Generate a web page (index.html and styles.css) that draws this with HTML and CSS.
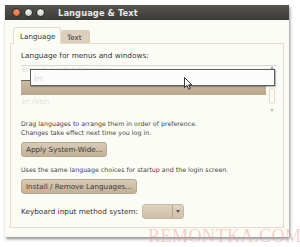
FILE: index.html
```html
<!DOCTYPE html>
<html>
<head>
<meta charset="utf-8">
<link rel="stylesheet" href="styles.css">
</head>
<body>
<div class="window">
  <div class="titlebar">
    <span class="tb-btn close"></span>
    <span class="tb-btn min"></span>
    <span class="tb-btn max"></span>
    <span class="title">Language &amp; Text</span>
  </div>
  <div class="client">
    <div class="tabs">
      <div class="tab active">Language</div>
      <div class="tab">Text</div>
    </div>
    <div class="frame">
      <div class="label">Language for menus and windows:</div>
      <div class="listwrap">
        <div class="list">
          <div class="row faint first">English (United Kingdom)</div>
          <div class="row selected"></div>
          <div class="row faint">Írt (Írto)</div>
        </div>
        <div class="scroll">
          <span class="arrow up"></span>
          <span class="thumb"></span>
          <span class="arrow down"></span>
        </div>
        <div class="drag"><span>Írt</span></div>
        <svg class="cursor" width="9" height="13" viewBox="0 0 9 13"><path d="M0.5 0.5 L0.5 10.5 L3 8.3 L4.8 12.3 L6.3 11.6 L4.6 7.8 L7.8 7.8 Z" fill="#fff" stroke="#222" stroke-width="0.9"/></svg>
      </div>
      <div class="hint">Drag languages to arrange them in order of preference.<br>Changes take effect next time you log in.</div>
      <div class="btn">Apply System-Wide...</div>
      <div class="hint single">Uses the same language choices for startup and the login screen.</div>
      <div class="btn">Install / Remove Languages...</div>
      <div class="kbd">
        <span>Keyboard input method system:</span>
        <div class="combo"><span class="combo-body"></span><span class="combo-arrow"></span></div>
      </div>
    </div>
  </div>
</div>
<div class="watermark">REMONTKA.COM</div>
</body>
</html>
```
FILE: styles.css
```css
html, body {
  margin: 0;
  padding: 0;
  background: #ffffff;
  width: 300px;
  height: 247px;
  overflow: hidden;
  font-family: "DejaVu Sans", "Liberation Sans", sans-serif;
  position: relative;
}
.window {
  margin: 5px 0 0 5px;
  width: 284px;
  height: 232px;
  background: #fcfcf7;
  box-shadow: 1px 2px 3px rgba(0,0,0,0.45);
  box-sizing: border-box;
  display: flex;
  flex-direction: column;
}
.titlebar {
  height: 15px;
  flex: none;
  background: linear-gradient(#55534e, #3c3b37);
  display: flex;
  align-items: center;
  padding-left: 7px;
  gap: 3px;
}
.tb-btn {
  width: 7px;
  height: 7px;
  border-radius: 50%;
  background: radial-gradient(circle at 50% 40%, #f0f0ee, #bdbcb8);
  border: 1px solid #2e2d2a;
  flex: none;
}
.tb-btn.close {
  background: radial-gradient(circle at 50% 40%, #f6946a, #df5a24);
}
.title {
  color: #e9e8e4;
  font-weight: bold;
  font-size: 8.3px;
  margin-left: 10px;
  letter-spacing: 0.1px;
}
.client {
  flex: 1;
  padding: 7px 5px 9px 5px;
  display: flex;
  flex-direction: column;
}
.tabs {
  display: flex;
  align-items: flex-end;
  height: 16px;
  padding-left: 3px;
  position: relative;
  z-index: 1;
}
.tab {
  font-size: 7.2px;
  color: #333;
  box-sizing: border-box;
}
.tab.active {
  width: 48px;
  border: 1px solid #e6dccb;
  border-bottom: none;
  background: #fcfcf7;
  border-radius: 2px 2px 0 0;
  padding: 4px 0 0 6px;
  height: 17px;
  margin-bottom: -1px;
}
.tab:not(.active) {
  width: 29px;
  height: 13px;
  background: #dcd0bd;
  border-radius: 2px 2px 0 0;
  padding: 3px 0 0 6px;
}
.frame {
  flex: 1;
  border: 1px solid #eadcc6;
  background: #fcfcf7;
  padding: 7px 9px 0 10px;
  display: flex;
  flex-direction: column;
}
.label {
  font-size: 7.3px;
  color: #333;
  line-height: 9px;
}
.listwrap {
  position: relative;
  margin-top: 5px;
  height: 46px;
  display: flex;
  border-top: 1px solid #d8d4dc;
  margin-right: -2px;
}
.list {
  flex: 1;
  display: flex;
  flex-direction: column;
}
.row {
  height: 14px;
  font-size: 7px;
  line-height: 14px;
  padding-left: 1px;
  box-sizing: border-box;
}
.row.first {
  line-height: 7px;
  padding-top: 1px;
}
.row.faint {
  color: #e3e0d8;
}
.row.selected {
  background: linear-gradient(#cbbba3, #b9a78c);
  border-top: 1px solid #6a6252;
  height: 15px;
  margin-right: 2px;
}
.scroll {
  width: 7px;
  position: relative;
  margin-left: 1px;
}
.arrow {
  position: absolute;
  left: 1px;
  width: 0;
  height: 0;
  border-left: 2px solid transparent;
  border-right: 2px solid transparent;
}
.arrow.up { top: 0; border-bottom: 3px solid #b5a993; }
.arrow.down { bottom: 0; border-top: 3px solid #c7bba6; }
.thumb {
  position: absolute;
  left: 0;
  top: 22px;
  width: 6px;
  height: 16px;
  border: 1px solid #e6d6bd;
  border-radius: 4px;
  background: #fcfcf7;
  box-sizing: border-box;
}
.drag {
  position: absolute;
  left: 9px;
  top: 3px;
  width: 245px;
  height: 17px;
  box-sizing: border-box;
  border: 1px solid #5e5d5a;
  background: #fcfcfc;
  box-shadow: 1px 1px 1px rgba(0,0,0,0.25);
  font-family: "DejaVu Serif", serif;
  font-size: 7px;
  line-height: 8px;
  color: #d8d6d0;
  padding: 5px 0 0 3px;
}
.cursor {
  position: absolute;
  left: 163px;
  top: 11px;
}
.hint {
  font-size: 6.3px;
  color: #444;
  line-height: 9px;
  margin-top: 7px;
}
.hint.single {
  margin-top: 8px;
}
.btn {
  align-self: flex-start;
  margin-top: 5px;
  height: 15px;
  box-sizing: border-box;
  padding: 0 4px;
  font-size: 7.2px;
  line-height: 13px;
  color: #3a3a3a;
  background: linear-gradient(#d9ccb8, #c2b197);
  border: 1px solid #b7a78e;
  border-radius: 3px;
}
.kbd {
  margin-top: 10px;
  display: flex;
  align-items: center;
  font-size: 7.3px;
  color: #333;
}
.combo {
  margin-left: 4px;
  width: 42px;
  height: 15px;
  box-sizing: border-box;
  border: 1px solid #c8b9a0;
  border-radius: 3px;
  background: linear-gradient(#e0d5c3, #cdbea6);
  display: flex;
}
.combo-body { flex: 1; }
.combo-arrow {
  width: 10px;
  border-left: 1px solid #b8a88e;
  position: relative;
}
.combo-arrow::after {
  content: "";
  position: absolute;
  left: 3px;
  top: 5px;
  border-left: 2px solid transparent;
  border-right: 2px solid transparent;
  border-top: 3px solid #555;
}
.watermark {
  position: absolute;
  left: 148px;
  top: 226px;
  font-family: "Liberation Serif", serif;
  font-size: 18px;
  color: rgba(232, 150, 150, 0.45);
  letter-spacing: 0.5px;
  white-space: nowrap;
}
```
